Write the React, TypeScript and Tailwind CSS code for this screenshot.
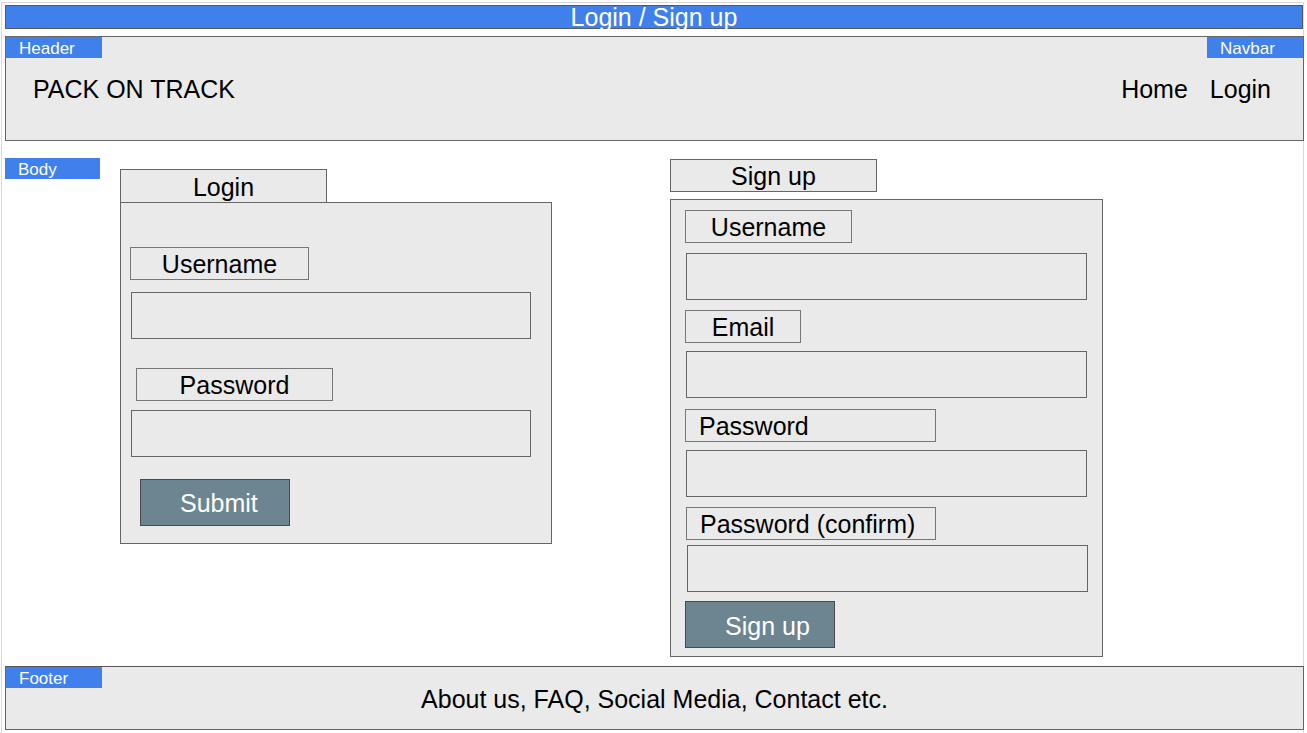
const font = { fontFamily: '"Liberation Sans", Arial, sans-serif' };

function Tag({ children }: { children: string }) {
  return (
    <div className="w-[96px] h-[21px] bg-[#4080ec] text-white text-[17px] leading-[23px] pl-[13px]">
      {children}
    </div>
  );
}

function Label({ text, className }: { text: string; className: string }) {
  return (
    <div className={`h-[33px] border border-[#777] bg-[#eaeaea] flex items-center pt-[2px] text-[25px] leading-[29px] text-black ${className}`}>
      {text}
    </div>
  );
}

function Field({ className }: { className: string }) {
  return <div className={`h-[47px] border border-[#666] bg-[#eaeaea] ${className}`} />;
}

function Button({ text, className }: { text: string; className: string }) {
  return (
    <div className={`w-[150px] h-[47px] bg-[#6c8591] border border-[#4a4a4a] text-white text-[25px] leading-[47px] pl-[39px] ${className}`}>
      {text}
    </div>
  );
}

export default function App() {
  return (
    <div className="w-[1307px] h-[733px] bg-white overflow-hidden" style={font}>
      <div className="ml-[1px] mt-[2px] w-[1303px] h-[731px] border-x border-t border-[#d9d9d9] pl-[3px] pt-[2px]">
        {/* title bar */}
        <div className="w-[1298px] h-[24px] bg-[#4080ec] border border-[#595959] text-white text-[25px] leading-[22px] text-center">
          Login / Sign up
        </div>

        {/* header */}
        <div className="mt-[7px] w-[1299px] h-[105px] bg-[#eaeaea] border border-[#666] flex justify-between">
          <div className="flex flex-col">
            <Tag>Header</Tag>
            <div className="mt-[17px] pl-[27px] text-[25px] leading-[29px] text-black">PACK ON TRACK</div>
          </div>
          <div className="flex flex-col items-end">
            <Tag>Navbar</Tag>
            <div className="mt-[17px] pr-[32px] flex gap-[22px] text-[25px] leading-[29px] text-black">
              <span>Home</span>
              <span>Login</span>
            </div>
          </div>
        </div>

        {/* body */}
        <div className="h-[525px] flex items-start pt-[17px]">
          <div className="w-[95px] h-[21px] bg-[#4080ec] text-white text-[17px] leading-[23px] pl-[13px]">Body</div>

          {/* login */}
          <div className="ml-[20px] mt-[11px] w-[432px] flex flex-col">
            <div className="w-[207px] h-[34px] border border-[#666] bg-[#eaeaea] text-center text-[25px] leading-[34px] text-black">
              Login
            </div>
            <div className="-mt-px h-[342px] border border-[#666] bg-[#eaeaea] pl-[9px] pt-[44px] flex flex-col">
              <Label text="Username" className="w-[179px] justify-center" />
              <Field className="mt-[12px] ml-px w-[400px]" />
              <Label text="Password" className="mt-[29px] ml-[6px] w-[197px] justify-center" />
              <Field className="mt-[9px] ml-px w-[400px]" />
              <Button text="Submit" className="mt-[22px] ml-[10px]" />
            </div>
          </div>

          {/* sign up */}
          <div className="ml-[118px] mt-px w-[433px] flex flex-col">
            <div className="w-[207px] h-[33px] border border-[#666] bg-[#eaeaea] text-center text-[25px] leading-[32px] text-black">
              Sign up
            </div>
            <div className="mt-[7px] h-[458px] border border-[#666] bg-[#eaeaea] pl-[14px] pt-[10px] flex flex-col">
              <Label text="Username" className="w-[167px] justify-center" />
              <Field className="mt-[10px] ml-px w-[401px]" />
              <Label text="Email" className="mt-[10px] w-[116px] justify-center" />
              <Field className="mt-[8px] ml-px w-[401px]" />
              <Label text="Password" className="mt-[11px] w-[251px] pl-[13px]" />
              <Field className="mt-[8px] ml-px w-[401px]" />
              <Label text="Password (confirm)" className="mt-[10px] ml-px w-[250px] pl-[13px]" />
              <Field className="mt-[5px] ml-[2px] w-[401px]" />
              <Button text="Sign up" className="mt-[9px] leading-[49px]" />
            </div>
          </div>
        </div>

        {/* footer */}
        <div className="relative w-[1299px] h-[64px] bg-[#eaeaea] border border-[#666] border-t-[#555] flex items-center justify-center pt-[2px]">
          <div className="absolute left-0 top-0">
            <Tag>Footer</Tag>
          </div>
          <span className="text-[25px] leading-[29px] text-black">About us, FAQ, Social Media, Contact etc.</span>
        </div>
      </div>
    </div>
  );
}
